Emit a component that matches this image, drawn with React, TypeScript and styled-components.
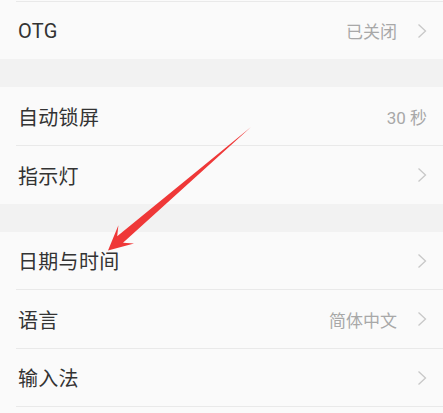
import React from "react";
import styled, { createGlobalStyle } from "styled-components";

const Global = createGlobalStyle`
  html, body { margin: 0; padding: 0; background: #fafafa; }
  body { font-family: Roboto, "Noto Sans CJK SC", sans-serif; }
`;

const Page = styled.div`
  position: relative;
  width: 443px;
  height: 413px;
  overflow: hidden;
  background: #fafafa;
  display: flex;
  flex-direction: column;
`;

const Line = styled.div<{ $top?: number }>`
  height: 1px;
  margin-top: ${(p) => p.$top ?? 0}px;
  margin-left: 16px;
  background: #e9e9e9;
  flex: none;
`;

const Band = styled.div`
  height: 28px;
  background: #f2f2f2;
  flex: none;
`;

const Row = styled.div<{ $h: number }>`
  height: ${(p) => p.$h}px;
  flex: none;
  display: flex;
  align-items: center;
  padding: 0 16px 0 18px;
  background: #fafafa;
`;

const Label = styled.span`
  flex: 1;
  font-family: Roboto, "Noto Sans CJK SC", sans-serif;
  font-size: 20px;
  font-weight: 400;
  color: #333333;
  letter-spacing: 0.3px;
`;

const Value = styled.span`
  font-family: Roboto, "Noto Sans CJK SC", sans-serif;
  font-size: 17px;
  color: #a8a8a8;
`;

const Chevron = styled.svg`
  width: 10px;
  height: 16px;
  margin-left: 20px;
  flex: none;
`;

const Arrow = styled.svg`
  position: absolute;
  left: 0;
  top: 0;
  pointer-events: none;
`;

const Chev = () => (
  <Chevron viewBox="0 0 10 16">
    <path d="M1.5 1.5 L8.5 8 L1.5 14.5" fill="none" stroke="#c8c8c8" strokeWidth="1.3" />
  </Chevron>
);

type Item = { label: string; value?: string; chevron?: boolean; h: number };

const SettingRow = ({ label, value, chevron = true, h }: Item) => (
  <Row $h={h}>
    <Label>{label}</Label>
    {value && <Value>{value}</Value>}
    {chevron && <Chev />}
  </Row>
);

export default function App() {
  return (
    <>
      <Global />
      <Page>
        <Line $top={1} />
        <SettingRow label="OTG" value="已关闭" h={57} />
        <Band />
        <SettingRow label="自动锁屏" value="30 秒" chevron={false} h={58} />
        <Line />
        <SettingRow label="指示灯" h={58} />
        <Band />
        <SettingRow label="日期与时间" h={57} />
        <Line />
        <SettingRow label="语言" value="简体中文" h={58} />
        <Line />
        <SettingRow label="输入法" h={57} />
        <Line />
        <Arrow width="443" height="413" viewBox="0 0 443 413">
          <polygon
            points="251,127 123,242.8 134,243.5 108,250.5 118.4,225.3 117.2,236.3"
            fill="#ef3838"
          />
        </Arrow>
      </Page>
    </>
  );
}
